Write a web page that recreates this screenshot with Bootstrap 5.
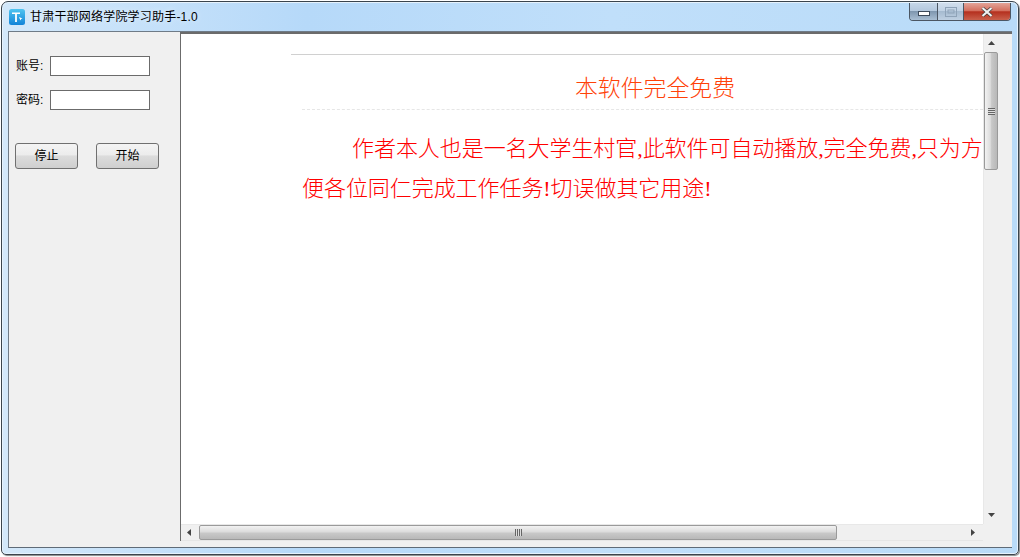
<!doctype html>
<html lang="zh">
<head>
<meta charset="utf-8">
<title>甘肃干部网络学院学习助手-1.0</title>
<link rel="stylesheet" href="https://cdn.jsdelivr.net/npm/bootstrap@5.3.0/dist/css/bootstrap.min.css">
<style>
html,body{margin:0;height:557px;overflow:hidden;background:#fff;font-family:"Liberation Sans","Noto Sans CJK SC",sans-serif}
.win-frame{width:1018px;height:554px;margin:1px 0 0 1px;border:1px solid #3a444d;border-radius:7px 7px 5px 5px;padding:0 5px 6px 6px;background:linear-gradient(90deg,#d3e8fa 0,#b6d9f9 30%,#c0dffa 60%,#b9dbf8 100%);box-shadow:inset 0 0 0 1px #e6f2fc,1px 1px 1px #8a8a8a}
.win-title{height:29px;padding-left:1px}
.title-name{font-size:12px;letter-spacing:.2px;color:#000;margin-left:5px;line-height:14px;text-shadow:0 0 5px #e8f4ff}
.win-ctrls{height:18px;width:102px;margin:1px 2px 0 0;border:1px solid #4b5663;border-top:0;border-radius:0 0 4px 4px;overflow:hidden;align-self:flex-start}
.ctrl{height:100%;border-right:1px solid #4b5663}
.ctrl-min{width:28px;background:linear-gradient(#c5d6e8 0,#b4c8dd 45%,#7f97af 50%,#a9bed3 100%)}
.ctrl-max{width:26px;background:linear-gradient(#d1deec 0,#c1d2e4 45%,#a6bbd0 50%,#bfd0e2 100%)}
.ctrl-close{flex:1;border-right:0;background:linear-gradient(#e3a498 0,#d4705f 45%,#b5301f 52%,#c9604c 100%)}
.win-body{height:517px;width:1004px;background:#f0f0f0;border-top:1px solid #6f7b87;border-bottom:1px solid #5f6b77;border-left:1px solid #6f7b87}
.side-pane{width:171px;flex:none;padding:24px 0 0 6px;font-size:12px;color:#000}
.field-row{height:20px;margin-bottom:14px}
.field-label{width:35px;padding-left:1px;white-space:nowrap}
.field-box{width:100px;height:20px;border:1px solid #6b6b6b;background:#fff;border-radius:0;padding:0}
.action-row{margin-top:33px;gap:18px}
.act-btn{width:63px;height:26px;padding:0;font-size:12px;line-height:24px;color:#000;border:1px solid #707070;border-radius:3px;background:linear-gradient(#f4f4f4 0,#ececec 45%,#dcdcdc 50%,#cfcfcf 100%)}
.main-pane{width:832px;height:509px;flex:none;padding-right:13px;border-top:2px solid #6b6b6b;border-left:1px solid #6b6b6b;background:#f0f0f0}
.view-row{height:490px}
.viewport{width:802px;height:490px;background:#fff;overflow:hidden;padding:20px 0 0 110px}
.top-rule{height:0;border-top:1px solid #d0d0d0;margin:0;opacity:1}
.doc-wrap{padding:0 0 0 11px;font-family:"Liberation Serif","Noto Sans CJK SC",serif;font-weight:300;width:692px}
.doc-head{color:#ff4208;font-size:22.86px;line-height:30px;text-align:center;padding:19px 0 5px;border-bottom:1px dashed #e6e6e6;margin:0;font-weight:300;width:706px}
.doc-text{color:#f00;font-size:22px;letter-spacing:-.06px;line-height:40px;text-indent:50px;margin:19px 0 0;width:681px}
.vbar{width:16px;height:490px;background:#f0f0f0;border-left:1px solid #e8e8e8;padding:0 1px 0 0}
.arrow-cell{height:18px}
.vthumb{height:118px;border:1px solid #9a9a9a;border-radius:2px;background:linear-gradient(90deg,#f2f2f2 0,#dcdcdc 45%,#c8c8c8 55%,#b8b8b8 100%)}
.grip-v{width:7px;height:7px;background:repeating-linear-gradient(#666 0,#666 1px,#ddd 1px,#ddd 2px)}
.hbar{height:17px;width:802px;background:#f0f0f0;border-top:1px solid #e8e8e8;border-bottom:1px solid #e6e6e6;padding-right:2px}
.arrow-cell-h{width:16px;height:100%}
.hthumb{width:638px;height:15px;border:1px solid #9a9a9a;border-radius:2px;background:linear-gradient(#f2f2f2 0,#dcdcdc 45%,#c8c8c8 55%,#b8b8b8 100%);margin-left:2px}
.grip-h{width:7px;height:7px;background:repeating-linear-gradient(90deg,#666 0,#666 1px,#ddd 1px,#ddd 2px)}
</style>
</head>
<body>
<div class="win-frame d-flex flex-column">
  <div class="win-title d-flex align-items-center justify-content-between">
    <div class="d-flex align-items-center" style="margin-top:1px">
      <svg width="16" height="16" viewBox="0 0 16 16"><defs><linearGradient id="ig" x1="0" y1="0" x2="0" y2="1"><stop offset="0" stop-color="#4fc4f0"/><stop offset="1" stop-color="#1183d8"/></linearGradient></defs><rect width="16" height="16" rx="2.5" fill="url(#ig)"/><path d="M3 3.5h8v1.6H7.900V13H6.100V5.100H3z" fill="#fff"/><path d="M10 8l3.500 1.400-1.400.6-.6 1.400z" fill="#fff"/></svg>
      <span class="title-name">甘肃干部网络学院学习助手-1.0</span>
    </div>
    <div class="win-ctrls d-flex">
      <div class="ctrl ctrl-min d-flex align-items-center justify-content-center"><svg width="12" height="6" viewBox="0 0 12 6" style="margin-top:4px"><rect x=".5" y=".5" width="11" height="4" fill="#fff" stroke="#3d4a5a"/></svg></div>
      <div class="ctrl ctrl-max d-flex align-items-center justify-content-center"><svg width="12" height="10" viewBox="0 0 12 10"><rect x=".5" y=".5" width="11" height="9" fill="none" stroke="#8fa3b8"/><rect x="3" y="3" width="6" height="3" fill="none" stroke="#8fa3b8"/></svg></div>
      <div class="ctrl ctrl-close d-flex align-items-center justify-content-center"><svg width="12" height="10" viewBox="0 0 12 10"><path d="M1.500 1l9 8M10.500 1l-9 8" stroke="#3a3a3a" stroke-width="3.400"/><path d="M1.500 1l9 8M10.500 1l-9 8" stroke="#f2f2f2" stroke-width="2.200"/></svg></div>
    </div>
  </div>
  <div class="win-body d-flex">
    <div class="side-pane">
      <div class="field-row d-flex align-items-center"><span class="field-label">账号:</span><input class="field-box" type="text"></div>
      <div class="field-row d-flex align-items-center"><span class="field-label">密码:</span><input class="field-box" type="text"></div>
      <div class="action-row d-flex">
        <button class="btn act-btn" type="button">停止</button>
        <button class="btn act-btn" type="button">开始</button>
      </div>
    </div>
    <div class="main-pane d-flex flex-column">
      <div class="view-row d-flex">
        <div class="viewport">
          <hr class="top-rule">
          <div class="doc-wrap">
            <h2 class="doc-head">本软件完全免费</h2>
            <p class="doc-text">作者本人也是一名大学生村官,此软件可自动播放,完全免费,只为方便各位同仁完成工作任务!切误做其它用途!</p>
          </div>
        </div>
        <div class="vbar d-flex flex-column">
          <div class="arrow-cell d-flex align-items-center justify-content-center"><svg width="7" height="4" viewBox="0 0 7 4"><path d="M3.500 0L7 4H0z" fill="#444"/></svg></div>
          <div class="vthumb d-flex align-items-center justify-content-center"><div class="grip-v"></div></div>
          <div class="flex-grow-1"></div>
          <div class="arrow-cell d-flex align-items-center justify-content-center"><svg width="7" height="4" viewBox="0 0 7 4"><path d="M0 0h7L3.500 4z" fill="#444"/></svg></div>
        </div>
      </div>
      <div class="hbar d-flex align-items-center">
        <div class="arrow-cell-h d-flex align-items-center justify-content-center"><svg width="4" height="7" viewBox="0 0 4 7"><path d="M4 0v7L0 3.500z" fill="#444"/></svg></div>
        <div class="hthumb d-flex align-items-center justify-content-center"><div class="grip-h"></div></div>
        <div class="flex-grow-1"></div>
        <div class="arrow-cell-h d-flex align-items-center justify-content-center"><svg width="4" height="7" viewBox="0 0 4 7"><path d="M0 0v7L4 3.500z" fill="#444"/></svg></div>
      </div>
    </div>
  </div>
</div>
</body>
</html>
